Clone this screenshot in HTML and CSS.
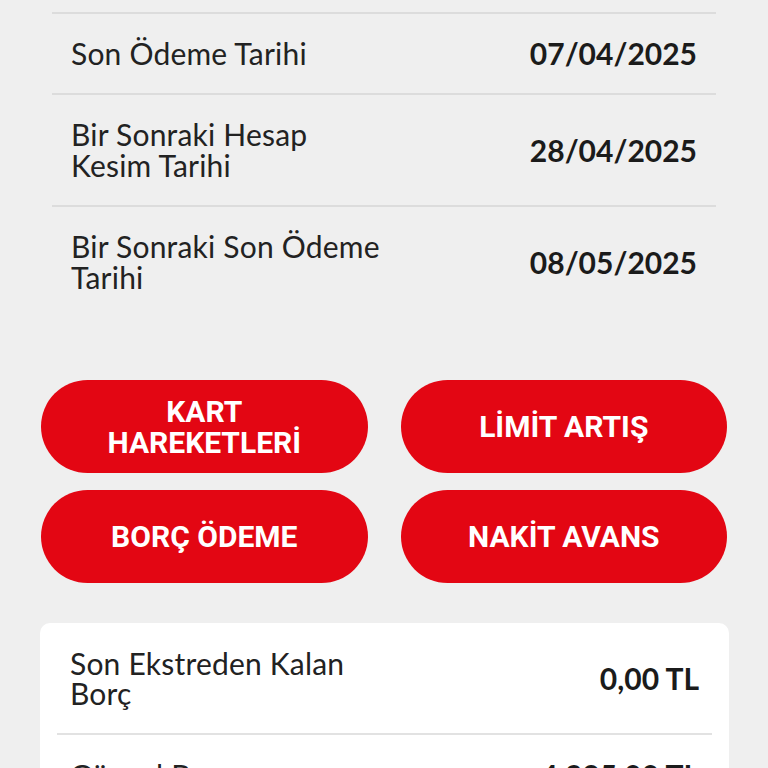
FILE: index.html
```html
<!DOCTYPE html>
<html lang="tr">
<head>
  <meta charset="UTF-8">
  <meta name="viewport" content="width=device-width, initial-scale=1.0">
  <title>Kart Detayı</title>
  <link rel="stylesheet" href="styles.css">
</head>
<body>
  <section class="dates">
    <div class="date-row">
      <span class="label">Son Ödeme Tarihi</span>
      <span class="value">07/04/2025</span>
    </div>
    <div class="date-row">
      <span class="label">Bir Sonraki Hesap<br>Kesim Tarihi</span>
      <span class="value">28/04/2025</span>
    </div>
    <div class="date-row">
      <span class="label">Bir Sonraki Son Ödeme<br>Tarihi</span>
      <span class="value">08/05/2025</span>
    </div>
  </section>

  <section class="actions">
    <a href="#" class="action-btn">KART<br>HAREKETLERİ</a>
    <a href="#" class="action-btn">LİMİT ARTIŞ</a>
    <a href="#" class="action-btn">BORÇ ÖDEME</a>
    <a href="#" class="action-btn">NAKİT AVANS</a>
  </section>

  <section class="debt-card">
    <div class="debt-row">
      <span class="label">Son Ekstreden Kalan<br>Borç</span>
      <span class="value">0,00 TL</span>
    </div>
    <div class="debt-row">
      <span class="label">Güncel Borç</span>
      <span class="value">4.295,00 TL</span>
    </div>
  </section>
</body>
</html>
```

FILE: styles.css
```css
body {
  margin: 0;
  background: #efefef;
  font-family: Lato, "Liberation Sans", sans-serif;
  color: #222;
}

.dates {
  margin: 12px 52px 0;
}

.date-row {
  display: flex;
  justify-content: space-between;
  align-items: center;
  padding: 24px 19px;
  border-top: 2px solid #dcdcdc;
}

.label {
  font-size: 30px;
  line-height: 31px;
  font-weight: 400;
  letter-spacing: 0.2px;
}

.value {
  font-size: 30px;
  line-height: 31px;
  font-weight: 700;
  color: #1b1b1b;
}

.actions {
  display: grid;
  grid-template-columns: 1fr 1fr;
  column-gap: 33px;
  row-gap: 17px;
  margin: 63px 41px 0;
}

.action-btn {
  display: flex;
  align-items: center;
  justify-content: center;
  height: 93px;
  border-radius: 47px;
  background: #e30613;
  color: #fff;
  text-decoration: none;
  text-align: center;
  font-family: Roboto, "Liberation Sans", sans-serif;
  font-weight: 700;
  font-size: 30px;
  line-height: 31px;
}

.debt-card {
  margin: 40px 39px 0 40px;
  padding: 0 17px;
  background: #fff;
  border-radius: 10px;
}

.debt-row {
  display: flex;
  justify-content: space-between;
  align-items: center;
  padding: 25px 13px;
  border-top: 2px solid #e2e2e2;
}

.debt-row:first-child {
  border-top: none;
}

.debt-row .label,
.debt-row .value {
  line-height: 30px;
}
```
